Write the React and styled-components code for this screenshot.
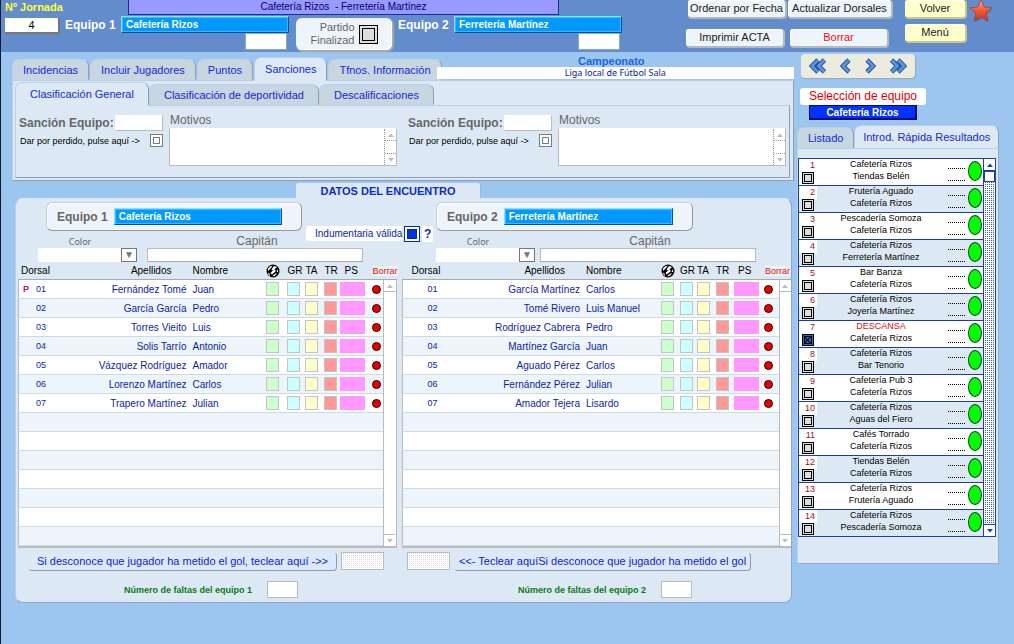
import React from "react";
import styled, { createGlobalStyle } from "styled-components";

const team1 = {
  name: "Cafetería Rizos",
  columns: [34, null, 74, 21, 18, 19, 16, 32, 11, 13],
  players: [
    ["01", "Fernández Tomé", "Juan", "P"],
    ["02", "García García", "Pedro"],
    ["03", "Torres Vieito", "Luis"],
    ["04", "Solis Tarrío", "Antonio"],
    ["05", "Vázquez Rodríguez", "Amador"],
    ["06", "Lorenzo Martínez", "Carlos"],
    ["07", "Trapero Martínez", "Julian"],
  ],
};

const team2 = {
  name: "Ferretería Martínez",
  columns: [42, null, 75, 19, 17, 19, 18, 30, 15, 12],
  players: [
    ["01", "García Martínez", "Carlos"],
    ["02", "Tomé Rivero", "Luis Manuel"],
    ["03", "Rodríguez Cabrera", "Pedro"],
    ["04", "Martínez García", "Juan"],
    ["05", "Aguado Pérez", "Carlos"],
    ["06", "Fernández Pérez", "Julian"],
    ["07", "Amador Tejera", "Lisardo"],
  ],
};

const matches = [
  ["Cafetería Rizos", "Tiendas Belén"],
  ["Frutería Aguado", "Cafetería Rizos"],
  ["Pescadería Somoza", "Cafetería Rizos"],
  ["Cafetería Rizos", "Ferretería Martínez"],
  ["Bar Banza", "Cafetería Rizos"],
  ["Cafetería Rizos", "Joyería Martínez"],
  ["DESCANSA", "Cafetería Rizos"],
  ["Cafetería Rizos", "Bar Tenorio"],
  ["Cafetería Pub 3", "Cafetería Rizos"],
  ["Cafetería Rizos", "Aguas del Fiero"],
  ["Cafés Torrado", "Cafetería Rizos"],
  ["Tiendas Belén", "Cafetería Rizos"],
  ["Cafetería Rizos", "Frutería Aguado"],
  ["Cafetería Rizos", "Pescadería Somoza"],
];

const swatches = [
  ["Goles", "#ccffcc"],
  ["GR", "#ccffff"],
  ["TA", "#ffffcc"],
  ["TR", "#ff9999"],
  ["PS", "#ff99ff"],
];

const ROWS = 14;

const Ball = () => (
  <svg width="14" height="14" viewBox="0 0 14 14" aria-label="Goles">
    <circle cx="7" cy="7" r="6.5" fill="#000" />
    <path d="M2 4.500L4.500 2l2 .3L3.500 5.500 2 7zM8 2l3 1-2.500 2.500L10 7 6 10.500 4.500 9 7 6.500 5.500 5.500zM11 5l1.300 2.500-1.500 1zM2 8.500l1.500 1L4 12 2.500 10.500zM9.500 9.500l1.500.3L8.500 12 6 12.300z" fill="#fff" />
  </svg>
);

const Star = () => (
  <svg width="24" height="24" viewBox="0 0 24 24" aria-hidden="true">
    <defs>
      <linearGradient id="starFill" x1="0" y1="0" x2="0" y2="1">
        <stop offset="0" stopColor="#ffb199" />
        <stop offset="0.5" stopColor="#ee5a3a" />
        <stop offset="1" stopColor="#c9361c" />
      </linearGradient>
    </defs>
    <path d="M13 1l3 7 7.500.8-5.700 5 1.700 8.200-6.500-4-6.800 4 1.800-8.200-5.500-5L10 8z" fill="#3c5380" opacity="0.6" />
    <path d="M12-.5l3 7.500 8 .8-6 5.200 2 8-7-4-7 4 2-8-6-5.200L9 7z" fill="url(#starFill)" stroke="#a8432f" strokeWidth="0.8" />
  </svg>
);

const Chevron = ({ double, right }) => (
  <svg width={double ? 18 : 12} height="16" viewBox={double ? "0 0 18 16" : "0 0 12 16"} aria-hidden="true">
    <g transform={right ? `translate(${double ? 18 : 12} 0) scale(-1 1)` : undefined} fill="none">
      <path d={double ? "M9 2L3 8l6 6M15.500 2l-6 6 6 6" : "M9 2L3 8l6 6"} stroke="#2a4f8c" strokeWidth="4.600" />
      <path d={double ? "M9 2L3 8l6 6M15.500 2l-6 6 6 6" : "M9 2L3 8l6 6"} stroke="#5a93e2" strokeWidth="2.800" />
    </g>
  </svg>
);

const Arrow = ({ down }) => (
  <svg width="6" height="4" viewBox="0 0 6 4" aria-hidden="true">
    <path d={down ? "M0 0h6L3 3.500z" : "M0 4h6L3 .5z"} fill="currentColor" />
  </svg>
);

const Scroll = ({ kind }) => (
  <ScrollBar $kind={kind}>
    <ScrollButton $kind={kind} aria-label="Subir">
      <Arrow />
    </ScrollButton>
    {kind === "blue" && <ScrollThumb />}
    <ScrollTrack $kind={kind} />
    <ScrollButton $kind={kind} aria-label="Bajar">
      <Arrow down />
    </ScrollButton>
  </ScrollBar>
);

const HeaderTeam = ({ label, name }) => (
  <TeamField>
    <TeamLabel $light htmlFor={`top-${label}`}>
      {label}
    </TeamLabel>
    <TeamInput id={`top-${label}`} defaultValue={name} />
    <ScoreInput aria-label={`Resultado ${label}`} />
  </TeamField>
);

const Sanction = ({ id }) => (
  <SanctionBlock>
    <SanctionFields>
      <SanctionLabel>
        Sanción Equipo:
        <SanctionInput />
      </SanctionLabel>
      <LostLabel>
        Dar por perdido, pulse aquí -&gt;
        <Check $size={13} $line="#6f7f7f" $fill="#fff" />
      </LostLabel>
    </SanctionFields>
    <div>
      <ReasonLabel htmlFor={id}>Motivos</ReasonLabel>
      <ReasonBox>
        <ReasonText id={id} />
        <Scroll kind="dotted" />
      </ReasonBox>
    </div>
  </SanctionBlock>
);

const TeamFields = ({ id, gap }) => (
  <FieldGroup $gap={gap}>
    <ColorLabel htmlFor={`color-${id}`}>Color</ColorLabel>
    <CaptainLabel htmlFor={`capitan-${id}`}>Capitán</CaptainLabel>
    <SelectWrap>
      <ColorSelect id={`color-${id}`} />
      <SelectArrow>▼</SelectArrow>
    </SelectWrap>
    <CaptainInput id={`capitan-${id}`} />
  </FieldGroup>
);

const Players = ({ team, indent }) => (
  <PlayerTable>
    <colgroup>
      {team.columns.map((width, i) => (
        <Col key={i} $width={width} />
      ))}
    </colgroup>
    <thead>
      <tr>
        <Th $align="left" $indent={indent}>
          Dorsal
        </Th>
        <Th $align="right" $end>
          Apellidos
        </Th>
        <Th $align="left">Nombre</Th>
        <Th $align="left">
          <Ball />
        </Th>
        <Th $align="left">GR</Th>
        <Th $align="left">TA</Th>
        <Th $align="left">TR</Th>
        <Th $align="left" $indent={4}>
          PS
        </Th>
        <Th $align="center" colSpan={2}>
          <DeleteLabel>Borrar</DeleteLabel>
        </Th>
      </tr>
    </thead>
    <tbody>
      {Array.from({ length: ROWS }, (_, i) => {
        const player = team.players[i];
        return (
          <PlayerRow key={i}>
            <Td $align="right" $first>
              {player && (
                <Dorsal>
                  <Captain>{player[3]}</Captain>
                  {player[0]}
                </Dorsal>
              )}
            </Td>
            <Td $align="right" $name>
              {player && player[1]}
            </Td>
            <Td $align="left">{player && player[2]}</Td>
            {swatches.map(([label, color]) => (
              <Td key={label} $align="left">
                {player && <Swatch $color={color} $wide={label === "PS"} aria-label={`${label} ${player[1]}`} />}
              </Td>
            ))}
            <Td $align="left">{player && <Dot aria-label={`Borrar ${player[1]}`} />}</Td>
            {i === 0 && (
              <ScrollCell rowSpan={ROWS}>
                <Scroll kind="grey" />
              </ScrollCell>
            )}
          </PlayerRow>
        );
      })}
    </tbody>
  </PlayerTable>
);

const App = () => {
  return (
    <Page>
      <GlobalStyle />
      <Header>
        <Jornada>
          <JornadaLabel htmlFor="jornada">Nº Jornada</JornadaLabel>
          <JornadaInput id="jornada" defaultValue="4" />
        </Jornada>
        <Match>
          <MatchTitle>Cafetería Rizos &nbsp;- Ferretería Martínez</MatchTitle>
          <MatchRow>
            <HeaderTeam label="Equipo 1" name={team1.name} />
            <Finished>
              <span>
                Partido
                <br />
                Finalizad
              </span>
              <Check $size={19} $line="#000" $fill="#ddd" />
            </Finished>
            <HeaderTeam label="Equipo 2" name={team2.name} />
          </MatchRow>
        </Match>
        <Actions>
          <ActionRow $gap={3} $indent={2}>
            <Button $width={97}>Ordenar por Fecha</Button>
            <Button $width={103}>Actualizar Dorsales</Button>
          </ActionRow>
          <ActionRow $gap={7}>
            <Button $width={97}>Imprimir ACTA</Button>
            <Button $width={97} $danger>
              Borrar
            </Button>
          </ActionRow>
        </Actions>
        <Navigation>
          <Button $width={60} $yellow>
            Volver
          </Button>
          <Button $width={60} $yellow>
            Menú
          </Button>
        </Navigation>
        <Star />
      </Header>

      <Body>
        <Main>
          <TopTabs>
            <Tab>Incidencias</Tab>
            <Tab>Incluir Jugadores</Tab>
            <Tab>Puntos</Tab>
            <Tab $active>Sanciones</Tab>
            <Tab>Tfnos. Información</Tab>
            <Championship>
              <ChampionshipLabel htmlFor="campeonato">Campeonato</ChampionshipLabel>
              <ChampionshipInput id="campeonato" defaultValue="Liga local de Fútbol Sala" />
            </Championship>
          </TopTabs>
          <Panel>
            <SubTabs>
              <Tab $wide $active>
                Clasificación General
              </Tab>
              <Tab $wide>Clasificación de deportividad</Tab>
              <Tab $wide>Descalificaciones</Tab>
            </SubTabs>
            <SubPanel>
              <Sanction id="motivos-1" />
              <Sanction id="motivos-2" />
            </SubPanel>
          </Panel>

          <DataTitle>DATOS DEL ENCUENTRO</DataTitle>
          <DataPanel>
            <Teams>
              <TeamBox>
                <TeamLabel htmlFor="equipo-1">Equipo 1</TeamLabel>
                <TeamInput id="equipo-1" defaultValue={team1.name} />
              </TeamBox>
              <Kit>
                <KitLabel htmlFor="indumentaria">Indumentaria válida</KitLabel>
                <Check id="indumentaria" defaultChecked $size={16} $line="#0c2a8c" $fill="#0033e6" $ring="#fff" />
                <Help>?</Help>
              </Kit>
              <TeamBox>
                <TeamLabel htmlFor="equipo-2">Equipo 2</TeamLabel>
                <TeamInput id="equipo-2" defaultValue={team2.name} />
              </TeamBox>
              <Fields>
                <TeamFields id="1" gap={10} />
                <TeamFields id="2" gap={5} />
              </Fields>
            </Teams>
            <Tables>
              <Players team={team1} indent={3} />
              <Players team={team2} indent={10} />
            </Tables>
            <UnknownRow>
              <UnknownLabel $width={309} htmlFor="gol-1">
                Si desconoce que jugador ha metido el gol, teclear aquí -&gt;&gt;
              </UnknownLabel>
              <UnknownInput id="gol-1" />
              <Gap />
              <UnknownInput id="gol-2" />
              <UnknownLabel $width={297} htmlFor="gol-2">
                &lt;&lt;- Teclear aquíSi desconoce que jugador ha metido el gol
              </UnknownLabel>
            </UnknownRow>
            <FoulsRow>
              <FoulsLabel>
                Número de faltas del equipo 1
                <FoulsInput />
              </FoulsLabel>
              <FoulsLabel>
                Número de faltas del equipo 2
                <FoulsInput />
              </FoulsLabel>
            </FoulsRow>
          </DataPanel>
        </Main>

        <Side>
          <Pager>
            <PagerButton aria-label="Primera">
              <Chevron double />
            </PagerButton>
            <PagerButton aria-label="Anterior">
              <Chevron />
            </PagerButton>
            <PagerButton aria-label="Siguiente">
              <Chevron right />
            </PagerButton>
            <PagerButton aria-label="Última">
              <Chevron double right />
            </PagerButton>
          </Pager>
          <PickLabel htmlFor="seleccion">Selección de equipo</PickLabel>
          <PickInput id="seleccion" defaultValue="Cafetería Rizos" />
          <SideTabs>
            <Tab>Listado</Tab>
            <Tab $active $fill>
              Introd. Rápida Resultados
            </Tab>
          </SideTabs>
          <SidePanel>
            <ListBox>
              <List>
                {matches.map(([home, away], i) => (
                  <Item key={i}>
                    <Number>
                      {i + 1}
                      <Check
                        $size={12}
                        $line="#000"
                        $fill={i === 6 ? "#2f66b4" : "#ddd"}
                        $crossed={i === 6}
                        defaultChecked={i === 6}
                        aria-label={`Jornada ${i + 1}`}
                      />
                    </Number>
                    <Names>
                      <Name $rest={home === "DESCANSA"}>{home}</Name>
                      <Name>{away}</Name>
                    </Names>
                    <Results>
                      <Result aria-label={`Goles ${home}`} />
                      <Result aria-label={`Goles ${away}`} />
                    </Results>
                    <Go aria-label={`Abrir jornada ${i + 1}`} />
                  </Item>
                ))}
              </List>
              <Scroll kind="blue" />
            </ListBox>
          </SidePanel>
        </Side>
      </Body>
    </Page>
  );
};
export default App;

const GlobalStyle = createGlobalStyle`
  * {
    box-sizing: border-box;
  }

  body {
    margin: 0;
    background-color: #9cc5ef;
    font-family: "Liberation Sans", Arial, sans-serif;
    font-size: 10px;
    color: #000;
  }

  button,
  input,
  select,
  textarea {
    margin: 0;
    padding: 0;
    border: none;
    border-radius: 0;
    outline: none;
    font: inherit;
    color: inherit;
    min-width: 0;
  }

  svg {
    display: block;
    flex-shrink: 0;
  }
`;

const Page = styled.div`
  min-height: 100vh;
  border-left: 1px solid #0b1a30;
`;

const Header = styled.header`
  display: flex;
  align-items: flex-start;
  height: 52px;
  padding: 0 21px 0 4px;
  background-color: #628ccc;
`;

const Jornada = styled.div`
  display: flex;
  flex-direction: column;
  width: 60px;
`;

const JornadaLabel = styled.label`
  font-size: 11px;
  font-weight: bold;
  line-height: 14px;
  color: #ffff33;
  white-space: nowrap;
`;

const JornadaInput = styled.input`
  width: 53px;
  height: 14px;
  margin-top: 4px;
  background-color: #fff;
  box-shadow: 1px 1px 0 1px #777;
  font-size: 11px;
  text-align: center;
`;

const Match = styled.div`
  flex: 1;
  margin-right: 64px;
`;

const MatchTitle = styled.div`
  height: 15px;
  margin: 0 63px;
  border: 1px solid #1c2c96;
  border-top: none;
  background-color: #9999ff;
  color: #000070;
  line-height: 13px;
  text-align: center;
`;

const MatchRow = styled.div`
  display: flex;
  justify-content: space-between;
`;

const TeamField = styled.div`
  display: grid;
  grid-template-columns: 50px 1fr;
  column-gap: 6px;
  align-items: center;
  flex: 0 1 224px;
  padding-top: 1px;
`;

const TeamLabel = styled.label`
  font-size: 12px;
  font-weight: bold;
  color: ${({ $light }) => ($light ? "#fff" : "#666")};
  white-space: nowrap;
`;

const TeamInput = styled.input`
  flex: 1;
  width: 100%;
  height: 17px;
  padding: 0 4px;
  border: 1px solid;
  border-color: #7fe6ff #0a50a0 #0a50a0 #7fe6ff;
  box-shadow: inset 0 0 0 1px #c8eeff55;
  background-color: #0099ff;
  color: #fff;
  font-weight: bold;
`;

const ScoreInput = styled.input`
  grid-column: 2;
  justify-self: end;
  width: 42px;
  height: 17px;
  margin: 0 2px;
  background-color: #fff;
  border: 1px solid #8da6c8;
`;

const Finished = styled.label`
  display: flex;
  align-items: center;
  justify-content: flex-end;
  gap: 4px;
  width: 96px;
  height: 32px;
  margin-top: 3px;
  padding-right: 14px;
  border-radius: 6px;
  background-color: #edf4fa;
  box-shadow: inset -1px -1px 0 #fff, 1px 1px 1px 1px #aaa;
  color: #666;
  font-size: 11px;
  line-height: 13px;
  text-align: right;
`;

const Check = styled.input.attrs({ type: "checkbox" })`
  appearance: none;
  flex-shrink: 0;
  width: ${({ $size }) => $size}px;
  height: ${({ $size }) => $size}px;
  border: 1px solid ${({ $line }) => $line};
  background-color: ${({ $fill }) => $fill};
  background-image: ${({ $crossed }) =>
    $crossed
      ? "linear-gradient(45deg, transparent 45%, #001a50 45% 55%, transparent 55%), linear-gradient(-45deg, transparent 45%, #001a50 45% 55%, transparent 55%)"
      : "none"};
  box-shadow: ${({ $fill, $ring = $fill, $line, $size }) =>
    `inset 0 0 0 ${$size > 12 ? 2 : 1}px ${$ring}, inset 0 0 0 ${$size > 12 ? 3 : 2}px ${$line}`};
`;

const Actions = styled.div`
  display: flex;
  flex-direction: column;
  gap: 12px;
  width: 205px;
  margin-right: 14px;
`;

const ActionRow = styled.div`
  display: flex;
  gap: ${({ $gap }) => $gap}px;
  padding-left: ${({ $indent = 0 }) => $indent}px;
`;

const Button = styled.button`
  width: ${({ $width }) => $width}px;
  height: 17px;
  border-radius: 3px;
  background-color: ${({ $yellow }) => ($yellow ? "#ffffcc" : "#edf4fc")};
  box-shadow: inset 1px 1px 0 #fff, 1px 1px 0 1px ${({ $yellow }) => ($yellow ? "#c9c78c" : "#b5b8b4")};
  color: ${({ $danger }) => ($danger ? "#ee1111" : "#222")};
  font-size: 11px;
  line-height: 15px;
  white-space: nowrap;
`;

const Navigation = styled.div`
  display: flex;
  flex-direction: column;
  gap: 7px;
  margin-right: 4px;
`;

const Body = styled.div`
  display: flex;
  align-items: flex-start;
  gap: 3px;
  padding: 0 15px 0 11px;
`;

const Main = styled.main`
  flex: 1;
  min-width: 0;
`;

const TopTabs = styled.nav`
  display: flex;
  align-items: flex-end;
  gap: 1px;
  height: 28px;
`;

const Tab = styled.button`
  flex: ${({ $fill }) => ($fill ? "1" : "none")};
  height: ${({ $active }) => ($active ? 24 : 21)}px;
  margin-bottom: ${({ $active }) => ($active ? -1 : 0)}px;
  padding: 0 ${({ $wide, $fill }) => ($fill ? 5 : $wide ? 14 : 10)}px;
  border: 1px solid;
  border-color: #b9cfea #8f9cb8 transparent #b9cfea;
  border-radius: 7px 7px 0 0;
  background-color: ${({ $active }) => ($active ? "#dce9f5" : "#c8d6e2")};
  color: #1428d8;
  font-size: 11px;
  line-height: 16px;
  white-space: nowrap;
`;

const Championship = styled.div`
  display: flex;
  flex-direction: column;
  flex: 1;
  margin-left: -6px;
  text-align: center;
`;

const ChampionshipLabel = styled.label`
  padding-right: 8px;
  font-size: 11px;
  font-weight: bold;
  line-height: 12px;
  color: #1a66e0;
`;

const ChampionshipInput = styled.input`
  height: 12px;
  margin-bottom: 1px;
  background-color: #fff;
  color: #0c1a9c;
  font-family: "Noto Sans", sans-serif;
  font-size: 9px;
  line-height: 12px;
  text-align: center;
`;

const Panel = styled.section`
  padding: 2px 3px 2px 2px;
  border: 1px solid;
  border-color: #b9cfea #8f9cb8 #8f9cb8 #b9cfea;
  background-color: #dce9f5;
`;

const SubTabs = styled.nav`
  display: flex;
  align-items: flex-end;
  height: 22px;
`;

const SubPanel = styled.div`
  display: flex;
  gap: 11px;
  padding: 7px 3px 11px;
  border: 1px solid;
  border-color: #b9cfea #8f9cb8 #8f9cb8 #b9cfea;
`;

const SanctionBlock = styled.div`
  display: grid;
  grid-template-columns: 144px 1fr;
  gap: 6px;
  flex: 1;
`;

const SanctionFields = styled.div`
  padding-top: 2px;
`;

const SanctionLabel = styled.label`
  display: flex;
  align-items: center;
  justify-content: space-between;
  color: #666;
  font-size: 12px;
  font-weight: bold;
  white-space: nowrap;
`;

const SanctionInput = styled.input`
  width: 48px;
  height: 16px;
  border: 1px solid;
  border-color: #fff #bbb #bbb #fff;
  background-color: #fff;
`;

const LostLabel = styled.label`
  display: flex;
  align-items: center;
  justify-content: space-between;
  margin-top: 3px;
  padding-left: 1px;
  font-size: 9px;
  white-space: nowrap;
`;

const ReasonLabel = styled.label`
  display: block;
  padding-left: 1px;
  color: #666;
  font-size: 12px;
  line-height: 15px;
`;

const ReasonBox = styled.div`
  display: flex;
  height: 38px;
  border: 1px solid;
  border-color: #fff #bbb #bbb #bbb;
  background-color: #fff;
`;

const ReasonText = styled.textarea`
  flex: 1;
  resize: none;
  background: none;
`;

const ScrollBar = styled.div`
  display: flex;
  flex-direction: column;
  flex-shrink: 0;
  width: 12px;
  height: 100%;
  border-left: 1px ${({ $kind }) => ($kind === "dotted" ? "dotted #999" : $kind === "blue" ? "solid #1a3fa8" : "solid #bbb")};
  background-color: #fff;
  color: ${({ $kind }) => ($kind === "blue" ? "#1a3fa8" : "#bbb")};
`;

const ScrollButton = styled.button`
  display: flex;
  align-items: center;
  justify-content: center;
  height: 12px;
  background-color: #fff;
  border: 0 ${({ $kind }) => ($kind === "dotted" ? "dotted #999" : $kind === "blue" ? "solid #1a3fa8" : "solid #bbb")};
  border-bottom-width: 1px;

  &:last-child {
    border-width: 1px 0 0;
  }
`;

const ScrollThumb = styled.div`
  height: 11px;
  border: 1px solid #1a3fa8;
  background-color: #fff;
`;

const ScrollTrack = styled.div`
  flex: 1;
  background: ${({ $kind }) => ($kind === "blue" ? "conic-gradient(#2f55b0 25%, #fff 0) 0 0 / 2px 2px" : "#fff")};
`;

const DataTitle = styled.h2`
  width: 185px;
  margin: 2px 0 0 284px;
  padding-top: 1px;
  border-radius: 3px 3px 0 0;
  border-right: 1px solid #a8b4c8;
  background-color: #dce9f5;
  color: #0c2cc8;
  font-size: 11px;
  line-height: 14px;
  text-align: center;
`;

const DataPanel = styled.section`
  margin: 0 2px 0 3px;
  padding: 3px 0 4px 2px;
  border: 1px solid;
  border-color: #dce9f5 #8fa3cc #8fa3cc #b9cfea;
  border-radius: 8px;
  background-color: #dce9f5;
`;

const Teams = styled.div`
  display: grid;
  grid-template-columns: 256px 134px 257px;
  padding-left: 28px;
`;

const TeamBox = styled.div`
  display: flex;
  align-items: center;
  gap: 6px;
  grid-row: 1;
  height: 29px;
  padding: 0 19px 0 10px;
  border: 1px solid;
  border-color: #c4ccd4 #999 #999 #c4ccd4;
  border-radius: 6px;
  background-color: #edf4fa;
  box-shadow: inset 1px 1px 0 #fff;
`;

const Kit = styled.div`
  display: flex;
  align-items: flex-start;
  gap: 2px;
  grid-column: 2;
  grid-row: 1 / 3;
  margin-top: 24px;
  padding-left: 4px;
`;

const KitLabel = styled.label`
  padding-left: 9px;
  border-radius: 3px;
  background-color: #fff;
  color: #0c1ea8;
  line-height: 15px;
  white-space: nowrap;
`;

const Help = styled.button`
  width: 11px;
  height: 16px;
  border-radius: 2px;
  background-color: #fff;
  color: #0c2cc8;
  font-size: 12px;
  font-weight: bold;
`;

const Fields = styled.div`
  display: flex;
  justify-content: space-between;
  grid-column: 1 / 4;
  grid-row: 2;
  width: 718px;
  margin: 4px 0 0 -8px;
`;

const FieldGroup = styled.div`
  display: grid;
  grid-template-columns: 99px 216px;
  column-gap: ${({ $gap }) => $gap}px;
`;

const ColorLabel = styled.label`
  width: 84px;
  color: #666;
  font-family: "Noto Sans", sans-serif;
  font-size: 9px;
  line-height: 13px;
  text-align: center;
`;

const CaptainLabel = styled.label`
  padding-left: 4px;
  color: #666;
  font-size: 12px;
  line-height: 12px;
  text-align: center;
`;

const SelectWrap = styled.div`
  display: flex;
  height: 14px;
  background-color: #fff;
`;

const ColorSelect = styled.select`
  appearance: none;
  flex: 1;
  background: none;
`;

const SelectArrow = styled.span`
  width: 16px;
  border: 1px solid #777;
  color: #777;
  font-size: 10px;
  line-height: 11px;
  text-align: center;
  pointer-events: none;
`;

const CaptainInput = styled.input`
  height: 14px;
  border: 1px solid;
  border-color: #bbb #bbb #aaa #bbb;
  background-color: #fff;
`;

const Tables = styled.div`
  display: grid;
  grid-template-columns: 379fr 390fr;
  gap: 5px;
`;

const PlayerTable = styled.table`
  width: 100%;
  table-layout: fixed;
  border-collapse: separate;
  border-spacing: 0;
  border-bottom: 2px solid #bbb;
`;

const Col = styled.col`
  width: ${({ $width }) => ($width ? `${$width}px` : "auto")};
`;

const Th = styled.th`
  height: 18px;
  padding: 0 ${({ $end }) => ($end ? 21 : 0)}px 0 ${({ $indent = 0 }) => $indent}px;
  border-bottom: 1px solid #aaa;
  font-weight: normal;
  text-align: ${({ $align }) => $align};
  white-space: nowrap;
`;

const DeleteLabel = styled.span`
  background-color: #edf1f5;
  color: #e01010;
  font-size: 9px;
`;

const PlayerRow = styled.tr`
  height: 19px;
  background-color: #fff;
  color: #0c1ea8;

  &:nth-child(even) {
    background-color: #edf4fa;
  }
`;

const Td = styled.td`
  height: 19px;
  padding: 0 ${({ $name }) => ($name ? 6 : 0)}px 0 0;
  border-bottom: 1px solid #cddbe6;
  border-left: ${({ $first }) => ($first ? "1px solid #bbb" : "none")};
  text-align: ${({ $align }) => $align};
  white-space: nowrap;
`;

const Dorsal = styled.div`
  display: flex;
  justify-content: space-between;
  padding: 0 6px 1px 4px;
  font-size: 9px;
`;

const Captain = styled.b`
  color: #b0108c;
`;

const Swatch = styled.input`
  display: block;
  width: ${({ $wide }) => ($wide ? 25 : 13)}px;
  height: 14px;
  border: 1px solid ${({ $wide }) => ($wide ? "#ff99ff" : "#c4c4c4")};
  background-color: ${({ $color }) => $color};
`;

const Dot = styled.button`
  display: block;
  width: 9px;
  height: 9px;
  border: 1px solid #300;
  border-radius: 50%;
  background-color: #e60000;
`;

const ScrollCell = styled.td`
  height: 266px;
  padding: 0;
  border-right: 1px solid #bbb;
  background-color: #fff;
`;

const UnknownRow = styled.div`
  display: flex;
  gap: 4px;
  padding: 4px 0 0 10px;
`;

const UnknownLabel = styled.label`
  width: ${({ $width }) => $width}px;
  height: 19px;
  border: 1px solid;
  border-color: #dce9f5 #8f9cb0 #8f9cb0 #dce9f5;
  border-radius: 4px;
  background-color: #dde9fb;
  color: #0c1ed0;
  font-size: 11px;
  line-height: 17px;
  text-align: center;
  white-space: nowrap;
`;

const UnknownInput = styled.input`
  width: 43px;
  height: 18px;
  border: 1px solid #bbb;
  background: conic-gradient(#ddd 25%, #fff 0) 0 0 / 2px 2px;
`;

const Gap = styled.span`
  width: 15px;
`;

const FoulsRow = styled.div`
  display: flex;
  gap: 220px;
  padding: 10px 0 0 106px;
`;

const FoulsLabel = styled.label`
  display: flex;
  align-items: center;
  gap: 15px;
  color: #0a7a14;
  font-size: 9px;
  font-weight: bold;
  white-space: nowrap;
`;

const FoulsInput = styled.input`
  width: 31px;
  height: 17px;
  border: 1px solid #bbb;
  background-color: #fff;
`;

const Side = styled.aside`
  display: flex;
  flex-direction: column;
  align-items: flex-start;
  width: 202px;
  flex-shrink: 0;
`;

const Pager = styled.div`
  display: flex;
  align-items: center;
  justify-content: space-between;
  width: 114px;
  height: 24px;
  margin: 2px 0 0 4px;
  padding: 0 8px;
  border-radius: 4px;
  background-color: #ecebe0;
  box-shadow: 1px 1px 1px #9aa8b4;
`;

const PagerButton = styled.button`
  background: none;
`;

const PickLabel = styled.label`
  width: 126px;
  margin: 10px 0 0 3px;
  border-radius: 3px;
  background-color: #fff;
  color: #dd0000;
  font-size: 12px;
  line-height: 17px;
  text-align: center;
`;

const PickInput = styled.input`
  width: 108px;
  height: 15px;
  margin-left: 12px;
  border: 1px solid #000a70;
  border-width: 1px 2px 2px 1px;
  background-color: #0033ff;
  color: #fff;
  font-weight: bold;
  text-align: center;
`;

const SideTabs = styled.nav`
  display: flex;
  align-items: flex-end;
  width: 100%;
  height: 28px;
`;

const SidePanel = styled.section`
  width: 100%;
  padding: 9px 2px 26px 0;
  border: 1px solid;
  border-color: #b9cfea #9aaccc #9aaccc #b9cfea;
  background-color: #dce9f5;
`;

const ListBox = styled.div`
  display: flex;
  border: 1px solid #1a3fa8;

  > div {
    height: auto;
  }
`;

const List = styled.ul`
  flex: 1;
  margin: 0;
  padding: 0;
  list-style: none;
`;

const Item = styled.li`
  display: grid;
  grid-template-columns: 18px 1fr 20px 18px;
  height: 27px;
  border-bottom: 1px solid #1a3fa8;
  background-color: #fff;

  &:nth-child(even) {
    background-color: #dce9f5;
  }

  &:last-child {
    height: 26px;
    border-bottom: none;
  }
`;

const Number = styled.label`
  display: flex;
  flex-direction: column;
  align-items: flex-end;
  padding-right: 2px;
  color: #a01020;
  font-size: 9px;
  line-height: 13px;
  background: linear-gradient(#fff, #fff) 0 0 / 100% 13px no-repeat;

  input {
    align-self: flex-start;
    margin-left: 3px;
  }
`;

const Names = styled.div`
  margin-top: -1px;
  text-align: center;
`;

const Name = styled.div`
  color: ${({ $rest }) => ($rest ? "#e01010" : "#000")};
  font-size: 9px;
  line-height: 12px;
`;

const Results = styled.div`
  display: flex;
  flex-direction: column;
  gap: 2px;
`;

const Result = styled.input`
  width: 17px;
  height: 10px;
  margin-left: 3px;
  border-bottom: 1px dotted #000;
  background: none;
`;

const Go = styled.button`
  width: 14px;
  height: 20px;
  margin: 2px 0 0 3px;
  border: 1px solid #064a06;
  border-radius: 50%;
  background-color: #00ff00;
`;
